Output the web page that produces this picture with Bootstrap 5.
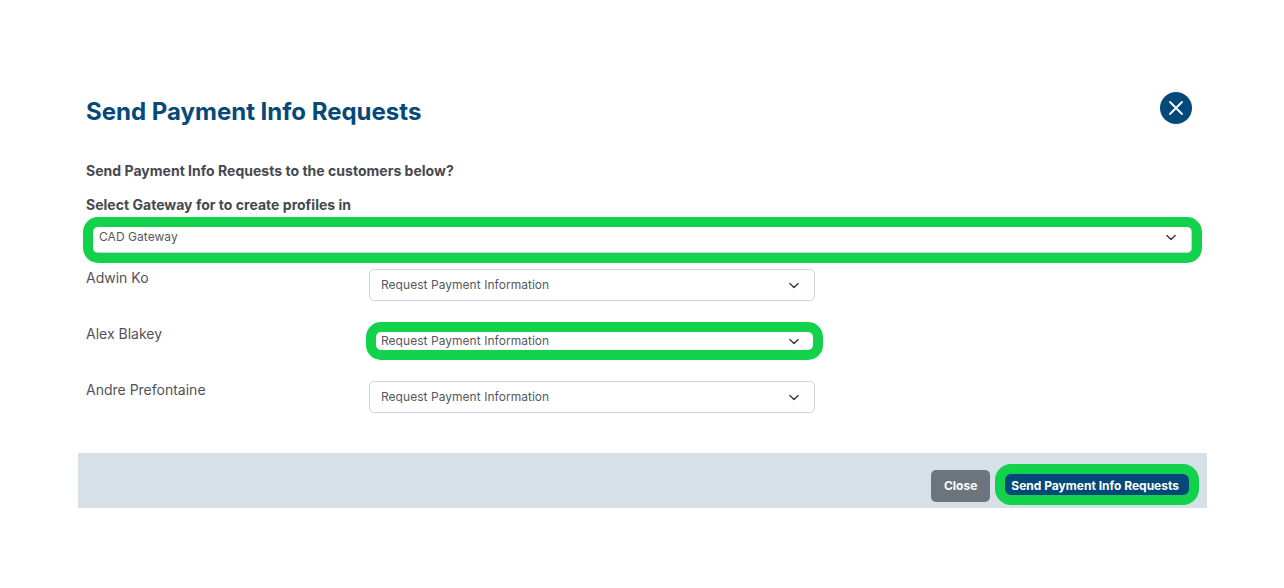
<!DOCTYPE html>
<html lang="en">
<head>
    <meta charset='utf-8'>
    <title>Send Payment Info Requests</title>
    <meta name='viewport' content='width=device-width, initial-scale=1'>
    <link href="https://cdn.jsdelivr.net/npm/bootstrap@5.3.5/dist/css/bootstrap.min.css" rel="stylesheet">
    <style>
        body {
            font-family: Inter, "Liberation Sans", sans-serif;
            color: #4f5359;
            background: #fff;
        }
        .sheet {
            width: 1129px;
            margin: 0 0 0 78px;
            padding-top: 80px;
        }
        .sheet-head {
            padding: 12px 15px 0 8px;
            height: 81px;
        }
        .sheet-title {
            font-size: 24px;
            line-height: 40px;
            font-weight: 700;
            color: #03497a;
            margin: 0;
        }
        .close-round {
            width: 32px;
            height: 32px;
            padding: 0;
            border: 0;
            border-radius: 50%;
            background: #03497a;
            display: flex;
            align-items: center;
            justify-content: center;
        }
        .sheet-body {
            padding: 0 15px 0 8px;
            height: 292px;
        }
        .sheet-label {
            font-size: 14px;
            line-height: 20px;
            font-weight: 700;
            letter-spacing: .02px;
            color: #45494f;
            margin: 0;
        }
        .label-gap {
            margin: 14px 0 6px;
        }
        .pick {
            position: relative;
        }
        .pick .form-select {
            height: 32px;
            font-size: 12px;
            line-height: 18px;
            letter-spacing: .04px;
            padding: 6px 36px 6px 12px;
            color: #55595f;
            border-color: #ced4da;
            border-radius: 5px;
            background-position: right 13px center;
            background-size: 14px 11px;
        }
        .pick-row {
            width: 1129px;
            height: 56px;
            margin-left: -12px;
            margin-right: 0;
        }
        .pick-row .col-3 {
            width: 283px;
        }
        .pick-row .col-5 {
            width: 470px;
        }
        .pick-row .form-select {
            padding-left: 11px;
        }
        .pick-name {
            font-size: 14px;
            line-height: 20px;
            margin-top: -1px;
        }
        .ring {
            position: absolute;
            border: 10px solid #12d24b;
            border-radius: 15px;
            pointer-events: none;
        }
        .ring-gateway { inset: -4px -10px -10px -3px; }
        .ring-row { inset: -3px -8px -3px -3px; }
        .ring-send { inset: -6px -7px -3px -3px; border-radius: 16px; }
        .sheet-foot {
            background: #d6e0e7;
            height: 55px;
            padding: 17px 15px 0 0;
        }
        .foot-btn {
            height: 32px;
            font-size: 12px;
            font-weight: 700;
            line-height: 18px;
            padding: 6px 12px;
            color: #fff;
            border-radius: 5px;
            border: 1px solid transparent;
        }
        .btn-close-gray { background: #6c757d; }
        .btn-send { background: #03497a; border-radius: 8px; }
    </style>
</head>
<body>
    <div class="sheet">
        <div class="sheet-head d-flex justify-content-between align-items-start">
            <h1 class="sheet-title">Send Payment Info Requests</h1>
            <button class="close-round" type="button" aria-label="Close">
                <svg width="16" height="16" viewBox="0 0 16 16" fill="none" stroke="#fff" stroke-width="1.8" stroke-linecap="round"><path d="M2 2 14 14M14 2 2 14"/></svg>
            </button>
        </div>
        <div class="sheet-body">
            <p class="sheet-label">Send Payment Info Requests to the customers below?</p>
            <p class="sheet-label label-gap">Select Gateway for to create profiles in</p>
            <div class="pick mb-3" id="gateway-pick"></div>
            <div id="customer-rows"></div>
        </div>
        <div class="sheet-foot d-flex justify-content-end align-items-start gap-2">
            <button class="btn foot-btn btn-close-gray" type="button">Close</button>
            <div class="pick d-flex">
                <button class="btn foot-btn btn-send" type="button">Send Payment Info Requests</button>
                <span class="ring ring-send"></span>
            </div>
        </div>
    </div>

    <script>
        const customers = [
            { name: "Adwin Ko", ring: false },
            { name: "Alex Blakey", ring: true },
            { name: "Andre Prefontaine", ring: false }
        ];

        document.getElementById("gateway-pick").innerHTML = `
            <select class="form-select"><option>CAD Gateway</option></select>
            <span class="ring ring-gateway"></span>
        `;

        document.getElementById("customer-rows").innerHTML = customers.map(c => `
            <div class="row pick-row">
                <div class="col-3 pick-name">${c.name}</div>
                <div class="col-5">
                    <div class="pick">
                        <select class="form-select"><option>Request Payment Information</option></select>
                        ${c.ring ? '<span class="ring ring-row"></span>' : ''}
                    </div>
                </div>
            </div>
        `).join("");
    </script>

    <script src="https://cdn.jsdelivr.net/npm/bootstrap@5.3.5/dist/js/bootstrap.bundle.min.js"></script>
</body>
</html>
